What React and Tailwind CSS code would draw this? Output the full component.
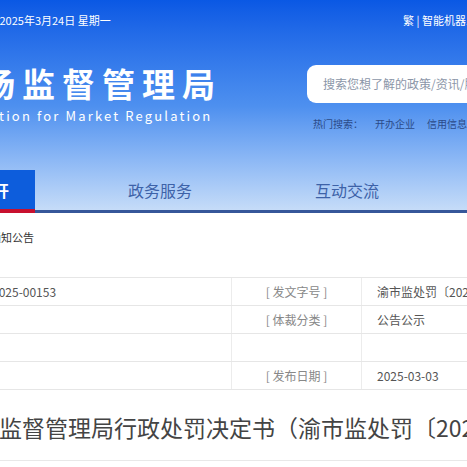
import React from 'react';

const rows = [
  { left: '2025-00153', label: '[ 发文字号 ]', value: '渝市监处罚〔2025〕3号' },
  { left: '', label: '[ 体裁分类 ]', value: '公告公示' },
  { left: '', label: '', value: '' },
  { left: '', label: '[ 发布日期 ]', value: '2025-03-03' },
];

export default function App() {
  return (
    <div
      className="w-[467px] h-[467px] overflow-hidden bg-white"
      style={{ fontFamily: '"Noto Sans CJK SC", "Noto Sans", sans-serif' }}
    >
      {/* Header banner */}
      <div className="h-[213px] bg-gradient-to-b from-[#0a58e4] via-[#4e90ef] to-[#c9def8] relative">
        <div className="flex justify-between items-center h-[40px] text-[11px] text-white whitespace-nowrap">
          <span className="-ml-[36px]">今天是 2025年3月24日 星期一</span>
          <span className="-mr-[10px]">繁 | 智能机器人</span>
        </div>

        <div className="flex items-start justify-between whitespace-nowrap">
          <div className="-ml-[58px] pt-[24px]">
            <div className="text-[33px] leading-[38px] font-bold text-white tracking-[7px]">市场监督管理局</div>
            <div className="text-[13px] leading-[16px] text-white tracking-[2.15px] mt-[6px] -ml-[30px]">Administration for Market Regulation</div>
          </div>
          <div className="pt-[25px] -mr-[80px]">
            <div className="w-[240px] h-[38px] bg-white rounded-[9px] flex items-center pl-[16px] text-[12px] text-[#8b96a8]">
              搜索您想了解的政策/资讯/服务
            </div>
            <div className="flex gap-[12px] text-[10px] text-[#2b4a88] mt-[13px] pl-[6px]">
              <span>热门搜索：</span>
              <span>开办企业</span>
              <span>信用信息</span>
            </div>
          </div>
        </div>

        {/* Nav */}
        <div className="absolute left-0 right-0 bottom-0 h-[43px] flex items-stretch border-b-[3px] border-[#36579a] whitespace-nowrap">
          <div className="w-[35px] shrink-0 bg-[#0d5ddc] flex items-center justify-end pr-[26px] text-[16px] font-bold text-white relative">
            公开
            <div className="absolute left-0 right-0 -bottom-[3px] h-[4px] bg-[#c8102e]"></div>
          </div>
          <div className="w-[250px] shrink-0 flex items-center justify-center text-[16px] text-[#3d62a8]">政务服务</div>
          <div className="w-[124px] shrink-0 flex items-center justify-center text-[16px] text-[#3d62a8]">互动交流</div>
        </div>
      </div>

      {/* Breadcrumb */}
      <div className="h-[51px] flex items-center pb-[2px] text-[11px] text-[#333] whitespace-nowrap">
        <span className="-ml-[10px]">通知公告</span>
      </div>

      <div className="h-[13px]"></div>

      {/* Info table */}
      <div className="border-t border-[#e6e6e6] whitespace-nowrap">
        {rows.map((r, i) => (
          <div key={i} className="flex h-[28px] border-b border-[#e6e6e6] text-[12px] overflow-hidden">
            <div className="w-[232px] shrink-0 flex items-center text-[#555] border-r border-[#ececec]">
              <span className="-ml-[8px]">{r.left}</span>
            </div>
            <div className="w-[130px] shrink-0 flex items-center justify-center text-[#888] border-r border-[#ececec]">{r.label}</div>
            <div className="flex-1 min-w-0 flex items-center pl-[15px] text-[#555]">{r.value}</div>
          </div>
        ))}
      </div>

      {/* Document title */}
      <div className="h-[71px] flex items-center border-b border-[#e8e8e8] whitespace-nowrap">
        <span className="text-[23px] text-[#444] -ml-[24px] pt-[4px]">场监督管理局行政处罚决定书（渝市监处罚〔2025〕3号）</span>
      </div>
    </div>
  );
}
